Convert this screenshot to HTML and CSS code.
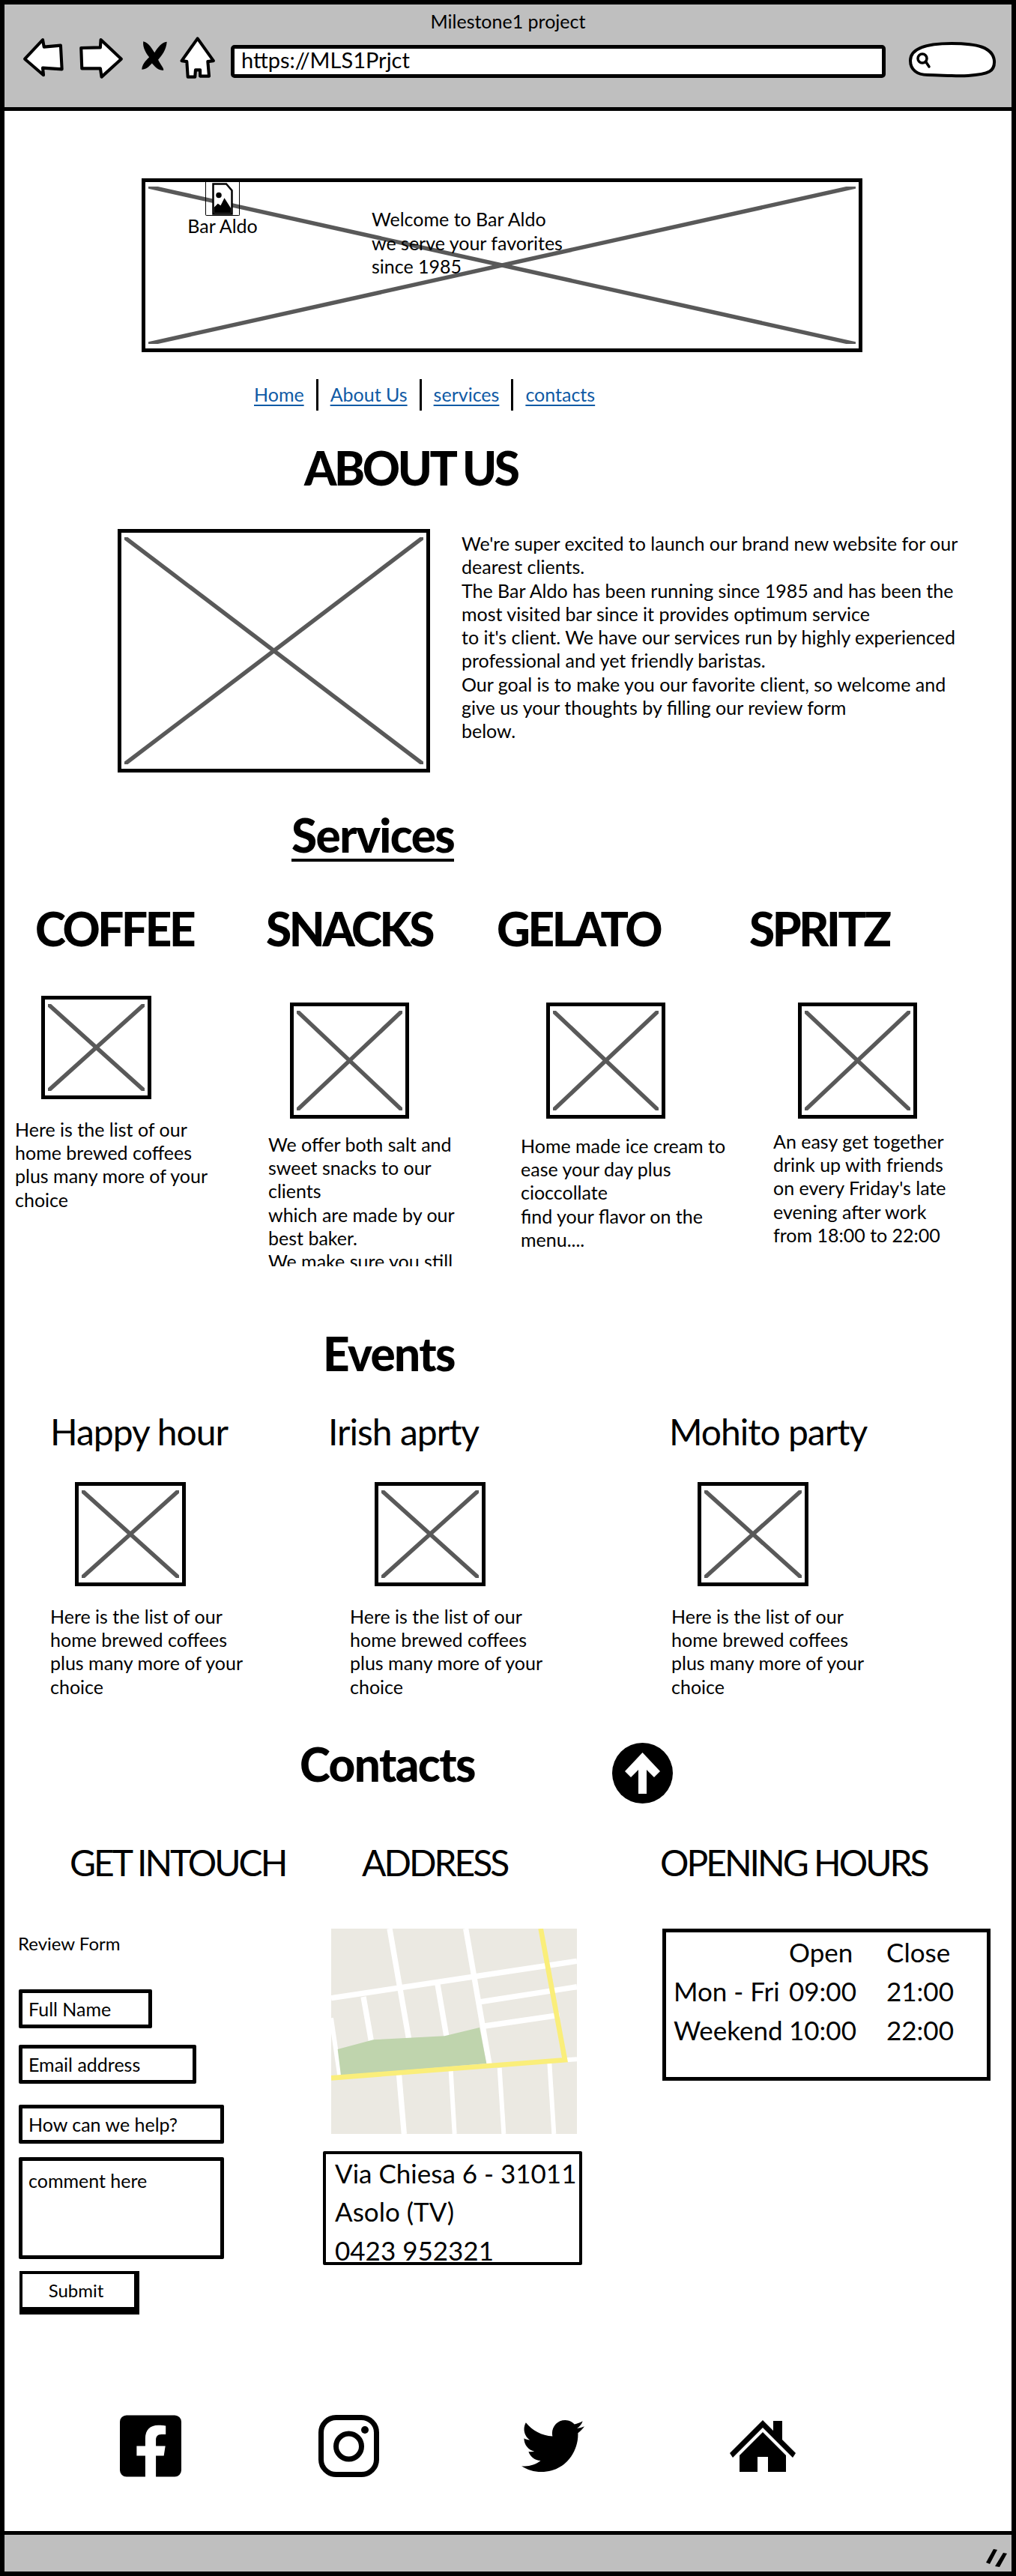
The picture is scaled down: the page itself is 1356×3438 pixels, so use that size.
FILE: index.html
```html
<!doctype html>
<html lang="en">
<head>
<meta charset="UTF-8">
<title>Milestone1 project</title>
<link rel="stylesheet" href="styles.css">
</head>
<body>
<div class="window">

  <!-- browser chrome -->
  <header class="chrome">
    <div class="chrome-title">Milestone1 project</div>
    <div class="chrome-row">
      <svg class="nav-icons" viewBox="90 130 770 180" aria-hidden="true">
        <path class="nav-shape" d="M105 225 L175 150 L180 178 L245 172 L250 265 L175 260 L178 288 Z"/>
        <path class="nav-shape" d="M325 182 L400 180 L402 150 L482 225 L405 295 L400 262 L328 262 Z"/>
        <path d="M568 156 C590 160 605 190 612 200 C625 180 640 160 660 158 C658 190 638 215 626 228 C634 245 652 265 646 270 C620 268 610 250 602 242 C590 254 580 266 562 266 C564 240 586 225 591 218 C581 205 564 180 568 156 Z"/>
        <path class="nav-shape" d="M780 145 L842 232 L820 235 L825 292 L790 292 L790 268 L772 268 L770 295 L742 295 L738 235 L718 232 Z"/>
      </svg>
      <div class="url-bar">https://MLS1Prjct</div>
      <svg class="search-box" viewBox="0 0 118 50" aria-hidden="true">
        <path class="search-pill" d="M3 26 C3 10 24 3 58 3 C92 3 113 8 115 26 C116 40 108 44 80 46 C60 47 44 45 26 45 C12 45 3 38 3 26 Z"/>
        <circle class="search-glass" cx="19" cy="23" r="6"/>
        <path class="search-glass" d="M24 28 L28 34"/>
      </svg>
    </div>
  </header>

  <main class="page">

    <section class="hero">
      <svg class="cross" viewBox="0 0 100 100" preserveAspectRatio="none" aria-hidden="true">
        <line x1="0" y1="0" x2="100" y2="100"/><line x1="100" y1="0" x2="0" y2="100"/>
      </svg>
      <div class="logo">
        <div class="logo-frame">
          <svg viewBox="0 0 24 34" aria-hidden="true">
            <path class="logo-file" d="M2 1 H16 L22 8 V33 H2 Z"/>
            <circle cx="8" cy="13" r="3"/>
            <path d="M3 32 V26 L7 22 L10 24 L14 16 L21 27 V32 Z"/>
          </svg>
        </div>
        <div class="logo-name">Bar Aldo</div>
      </div>
      <p class="hero-text">Welcome to Bar Aldo<br>we serve your favorites<br>since 1985</p>
    </section>

    <nav class="links">
      <a href="#">Home</a>
      <a href="#">About Us</a>
      <a href="#">services</a>
      <a href="#">contacts</a>
    </nav>

    <h1 class="big big-caps about-title">ABOUT US</h1>
    <section class="about">
      <div class="ph about-img">
        <svg class="cross" viewBox="0 0 100 100" preserveAspectRatio="none" aria-hidden="true">
          <line x1="0" y1="0" x2="100" y2="100"/><line x1="100" y1="0" x2="0" y2="100"/>
        </svg>
      </div>
      <p class="about-text">We're super excited to launch our brand new website for our<br>dearest clients.<br>The Bar Aldo has been running since 1985 and has been the<br>most visited bar since it provides optimum service<br>to it's client. We have our services run by highly experienced<br>professional and yet friendly baristas.<br>Our goal is to make you our favorite client, so welcome and<br>give us your thoughts by filling our review form<br>below.</p>
    </section>

    <h2 class="big services-title">Services</h2>
    <section class="services">
      <article class="svc svc-coffee">
        <h3 class="big big-caps svc-name">COFFEE</h3>
        <div class="ph svc-img"><svg class="cross" viewBox="0 0 100 100" preserveAspectRatio="none" aria-hidden="true"><line x1="0" y1="0" x2="100" y2="100"/><line x1="100" y1="0" x2="0" y2="100"/></svg></div>
        <p class="blurb">Here is the list of our<br>home brewed coffees<br>plus many more of your<br>choice</p>
      </article>
      <article class="svc svc-snacks">
        <h3 class="big big-caps svc-name">SNACKS</h3>
        <div class="ph svc-img"><svg class="cross" viewBox="0 0 100 100" preserveAspectRatio="none" aria-hidden="true"><line x1="0" y1="0" x2="100" y2="100"/><line x1="100" y1="0" x2="0" y2="100"/></svg></div>
        <p class="blurb">We offer both salt and<br>sweet snacks to our<br>clients<br>which are made by our<br>best baker.<br>We make sure you still</p>
      </article>
      <article class="svc svc-gelato">
        <h3 class="big big-caps svc-name">GELATO</h3>
        <div class="ph svc-img"><svg class="cross" viewBox="0 0 100 100" preserveAspectRatio="none" aria-hidden="true"><line x1="0" y1="0" x2="100" y2="100"/><line x1="100" y1="0" x2="0" y2="100"/></svg></div>
        <p class="blurb">Home made ice cream to<br>ease your day plus<br>cioccollate<br>find your flavor on the<br>menu....</p>
      </article>
      <article class="svc svc-spritz">
        <h3 class="big big-caps svc-name">SPRITZ</h3>
        <div class="ph svc-img"><svg class="cross" viewBox="0 0 100 100" preserveAspectRatio="none" aria-hidden="true"><line x1="0" y1="0" x2="100" y2="100"/><line x1="100" y1="0" x2="0" y2="100"/></svg></div>
        <p class="blurb">An easy get together<br>drink up with friends<br>on every Friday's late<br>evening after work<br>from 18:00 to 22:00</p>
      </article>
    </section>

    <h2 class="big events-title">Events</h2>
    <section class="events">
      <article class="evt evt-happy">
        <h3 class="sub">Happy hour</h3>
        <div class="ph evt-img"><svg class="cross" viewBox="0 0 100 100" preserveAspectRatio="none" aria-hidden="true"><line x1="0" y1="0" x2="100" y2="100"/><line x1="100" y1="0" x2="0" y2="100"/></svg></div>
        <p class="blurb">Here is the list of our<br>home brewed coffees<br>plus many more of your<br>choice</p>
      </article>
      <article class="evt evt-irish">
        <h3 class="sub">Irish aprty</h3>
        <div class="ph evt-img"><svg class="cross" viewBox="0 0 100 100" preserveAspectRatio="none" aria-hidden="true"><line x1="0" y1="0" x2="100" y2="100"/><line x1="100" y1="0" x2="0" y2="100"/></svg></div>
        <p class="blurb">Here is the list of our<br>home brewed coffees<br>plus many more of your<br>choice</p>
      </article>
      <article class="evt evt-mohito">
        <h3 class="sub">Mohito party</h3>
        <div class="ph evt-img"><svg class="cross" viewBox="0 0 100 100" preserveAspectRatio="none" aria-hidden="true"><line x1="0" y1="0" x2="100" y2="100"/><line x1="100" y1="0" x2="0" y2="100"/></svg></div>
        <p class="blurb">Here is the list of our<br>home brewed coffees<br>plus many more of your<br>choice</p>
      </article>
    </section>

    <div class="contacts-head">
      <h2 class="big contacts-title">Contacts</h2>
      <svg class="to-top" viewBox="0 0 81 81" aria-hidden="true">
        <circle cx="40.5" cy="40.5" r="40.5"/>
        <path class="to-top-arrow" d="M40.5 13 L64 38 L56 46 L46 36 V68 H35 V36 L25 46 L17 38 Z"/>
      </svg>
    </div>

    <section class="contacts">
      <div class="col-form">
        <h3 class="sub caps">GET INTOUCH</h3>
        <form class="review">
          <label class="review-label">Review Form</label>
          <input class="field field-name" type="text" placeholder="Full Name">
          <input class="field field-email" type="text" placeholder="Email address">
          <input class="field field-help" type="text" placeholder="How can we help?">
          <textarea class="field field-comment" placeholder="comment here"></textarea>
          <button class="submit" type="button">Submit</button>
        </form>
      </div>
      <div class="col-address">
        <h3 class="sub caps">ADDRESS</h3>
        <svg class="map" viewBox="66 42 984 822" aria-hidden="true">
          <rect x="66" y="42" width="984" height="822" fill="#ebe9e2"/>
          <g class="roads">
            <path d="M66 320 L1050 172"/>
            <path d="M300 42 L378 490"/>
            <path d="M605 42 L700 590"/>
            <path d="M195 315 L226 490"/>
            <path d="M492 265 L528 475"/>
            <path d="M665 335 L1050 275"/>
            <path d="M680 432 L980 388"/>
            <path class="road-thin" d="M66 400 L100 630"/>
            <path d="M337 620 L358 864"/>
            <path class="road-thin" d="M545 610 L560 864"/>
            <path class="road-thin" d="M740 600 L757 864"/>
            <path class="road-thin" d="M940 580 L958 864"/>
            <path class="road-thin" d="M1010 567 L1050 565"/>
          </g>
          <path fill="#bfd4ad" d="M92 525 L235 487 L520 472 L660 438 L688 582 L105 630 Z"/>
          <path class="highway" d="M905 42 L1002 568 L66 640"/>
        </svg>
        <div class="address-box">Via Chiesa 6 - 31011<br>Asolo (TV)<br>0423 952321</div>
      </div>
      <div class="col-hours">
        <h3 class="sub caps">OPENING HOURS</h3>
        <table class="hours">
          <tr><td></td><td class="h-open">Open</td><td class="h-close">Close</td></tr>
          <tr><td>Mon - Fri</td><td class="h-open">09:00</td><td class="h-close">21:00</td></tr>
          <tr><td>Weekend</td><td class="h-open">10:00</td><td class="h-close">22:00</td></tr>
        </table>
      </div>
    </section>

    <footer class="social">
      <svg class="ic-fb" viewBox="0 32 448 448" aria-hidden="true"><path d="M400 32H48A48 48 0 0 0 0 80v352a48 48 0 0 0 48 48h137.25V327.69h-63V256h63v-54.64c0-62.15 37-96.48 93.67-96.48 27.14 0 55.52 4.84 55.52 4.84v61h-31.27c-30.81 0-40.42 19.12-40.42 38.73V256h68.78l-11 71.69h-57.78V480H400a48 48 0 0 0 48-48V80a48 48 0 0 0-48-48z"/></svg>
      <svg class="ic-insta" viewBox="0 0 81 83" aria-hidden="true">
        <rect class="insta-line" x="3.5" y="3.5" width="74" height="76" rx="20"/>
        <circle class="insta-line" cx="40.5" cy="42" r="17"/>
        <circle cx="62" cy="20" r="5"/>
      </svg>
      <svg class="ic-twitter" viewBox="0 48 512 416" preserveAspectRatio="none" aria-hidden="true"><path d="M459.37 151.716c.325 4.548.325 9.097.325 13.645 0 138.72-105.583 298.558-298.558 298.558-59.452 0-114.68-17.219-161.137-47.106 8.447.974 16.568 1.299 25.34 1.299 49.055 0 94.213-16.568 130.274-44.832-46.132-.975-84.792-31.188-98.112-72.772 6.498.974 12.995 1.624 19.818 1.624 9.421 0 18.843-1.3 27.614-3.573-48.081-9.747-84.143-51.98-84.143-102.985v-1.299c13.969 7.797 30.214 12.67 47.431 13.319-28.264-18.843-46.781-51.005-46.781-87.391 0-19.492 5.197-37.36 14.294-52.954 51.655 63.675 129.3 105.258 216.365 109.807-1.624-7.797-2.599-15.918-2.599-24.04 0-57.828 46.782-104.934 104.934-104.934 30.213 0 57.502 12.67 76.67 33.137 23.715-4.548 46.456-13.32 66.599-25.34-7.798 24.366-24.366 44.833-46.132 57.827 21.117-2.273 41.584-8.122 60.426-16.243-14.292 20.791-32.161 39.308-52.628 54.253z"/></svg>
      <svg class="ic-home" viewBox="0 0 88 69" aria-hidden="true">
        <path d="M44 0 L58 14 V1 H70 V26 L88 44 L84 50 L44 10 L4 50 L0 44 Z"/>
        <path d="M44 16 L75 47 V69 H51 V49 H37 V69 H13 V47 Z"/>
      </svg>
    </footer>
  </main>

  <div class="statusbar">
    <svg class="grip" viewBox="0 0 30 26" aria-hidden="true">
      <path d="M1 20 L11 2 L16 3 L6 22 Z"/>
      <path d="M13 25 L24 7 L29 8 L19 26 Z"/>
    </svg>
  </div>
</div>
</body>
</html>
```

FILE: styles.css
```css
* { box-sizing: border-box; }
html, body { margin: 0; padding: 0; }
body { font-family: "Lato", "Noto Sans", sans-serif; color: #000; background: #fff; }
h1, h2, h3, p { margin: 0; font-weight: normal; }

.window { width: 1356px; height: 3438px; border: 6px solid #000; display: flex; flex-direction: column; overflow: hidden; }

/* browser chrome */
.chrome { height: 142px; background: #bfbfbf; border-bottom: 5px solid #000; flex-shrink: 0; }
.chrome-title { text-align: center; font-size: 25px; line-height: 30px; padding-top: 7px; }
.chrome-row { display: flex; align-items: center; margin-top: 3px; padding-left: 22px; }
.nav-icons { width: 263px; height: 62px; flex-shrink: 0; }
.nav-shape { fill: #fff; stroke: #000; stroke-width: 12; stroke-linejoin: round; }
.url-bar { width: 874px; height: 44px; margin-left: 17px; margin-top: 10px; border: 5px solid #000; border-radius: 5px; background: #fff; font-size: 29px; line-height: 30px; padding-left: 9px; }
.search-box { width: 118px; height: 50px; margin-left: 30px; margin-top: 6px; }
.search-pill { fill: #fff; stroke: #000; stroke-width: 4; }
.search-glass { fill: none; stroke: #000; stroke-width: 3.5; stroke-linecap: round; }

.page { flex: 1; }

/* placeholder images */
.ph { position: relative; border: 5px solid #000; background: #fff; flex-shrink: 0; }
.cross { position: absolute; left: 4px; top: 6px; width: calc(100% - 8px); height: calc(100% - 12px); }
.cross line { stroke: #595959; stroke-width: 5.5; vector-effect: non-scaling-stroke; }

/* headings */
.big { font-weight: 900; font-size: 62px; line-height: 70px; letter-spacing: -1.6px; white-space: nowrap; }
.big-caps { letter-spacing: -3.4px; }
.sub { font-size: 48px; line-height: 60px; letter-spacing: -1px; white-space: nowrap; }
.caps { letter-spacing: -3px; }
.blurb { font-size: 25px; line-height: 31.2px; }

/* hero */
.hero { position: relative; width: 962px; height: 232px; margin: 90px 0 0 183px; border: 5px solid #000; display: flex; padding-left: 54px; }
.logo { position: relative; width: 98px; text-align: center; }
.logo-frame { width: 46px; height: 46px; margin: -1px auto 0; border: 1.5px solid #000; border-top: 0; border-radius: 0 0 2px 2px; padding: 2px 7px 0; background: transparent; }
.logo-frame svg { width: 100%; height: 100%; display: block; }
.logo-file { fill: #fff; stroke: #000; stroke-width: 2; }
.logo-name { font-size: 25px; line-height: 30px; margin-top: -2px; white-space: nowrap; }
.hero-text { position: relative; margin: 34px 0 0 150px; font-size: 25px; line-height: 31.5px; white-space: nowrap; }

/* nav */
.links { display: flex; height: 42px; margin: 36px 0 0 317px; }
.links a { color: #0f5aa5; font-size: 25px; line-height: 40px; padding: 0 16px; text-decoration: underline; text-underline-offset: 4px; border-right: 3px solid #000; }
.links a:last-child { border-right: 0; }

/* about */
.about-title { margin: 41px 0 0 400px; }
.about { display: flex; margin: 47px 0 0 151px; }
.about-img { width: 417px; height: 325px; }
.about-text { margin-left: 42px; padding-top: 4px; font-size: 25px; line-height: 31.3px; white-space: nowrap; }

/* services */
.services-title { display: inline-block; margin: 51px 0 0 383px; line-height: 64px; border-bottom: 4px solid #000; }
.services { display: grid; grid-template-columns: 335px 308px 337px 350px; margin: 54px 0 0 14px; }
.svc { display: flex; flex-direction: column; }
.svc-img { width: 159px; height: 155px; margin-top: 64px; }
.svc .blurb { overflow: hidden; white-space: nowrap; }
.svc-coffee .svc-name { padding-left: 27px; }
.svc-coffee .svc-img { width: 147px; height: 138px; margin: 55px 0 0 35px; }
.svc-coffee .blurb { margin-top: 25px; }
.svc-snacks .svc-img { margin-left: 32px; }
.svc-snacks .blurb { margin: 19px 0 0 3px; height: 178px; }
.svc-gelato .svc-img { margin-left: 66px; }
.svc-gelato .blurb { margin: 21px 0 0 32px; }
.svc-spritz .svc-img { margin-left: 65px; }
.svc-spritz .blurb { margin: 15px 0 0 32px; }

/* events */
.events-title { margin: 81px 0 0 425px; }
.events { display: grid; grid-template-columns: 371px 455px 1fr; margin: 40px 0 0 61px; }
.evt-img { width: 148px; height: 139px; margin: 37px 0 0 33px; }
.evt .blurb { margin-top: 25px; white-space: nowrap; }
.evt-irish .evt-img { margin-left: 62px; }
.evt-irish .blurb { margin-left: 29px; }
.evt-mohito .evt-img { margin-left: 38px; }
.evt-mohito .blurb { margin-left: 3px; }

/* contacts */
.contacts-head { display: flex; margin: 52px 0 0 394px; }
.contacts-title { width: 417px; }
.to-top { width: 81px; height: 81px; margin-top: 7px; }
.to-top-arrow { fill: #fff; }

.contacts { display: grid; grid-template-columns: 407px 450px 1fr; margin: 49px 0 0 18px; }
.col-form .sub { padding-left: 69px; }
.col-address .sub { padding-left: 52px; }

.review { display: flex; flex-direction: column; align-items: flex-start; }
.review-label { font-size: 24px; line-height: 30px; margin-top: 63px; }
.field { display: block; height: 52px; margin-left: 1px; border: 5px solid #000; border-radius: 2px; background: #fff; padding: 0 8px; font: 25px "Lato", "Noto Sans", sans-serif; color: #000; outline: none; }
.field::placeholder { color: #000; opacity: 1; }
.field-name { width: 178px; margin-top: 46px; }
.field-email { width: 237px; margin-top: 22px; }
.field-help { width: 274px; margin-top: 28px; }
.field-comment { width: 274px; height: 136px; margin-top: 18px; padding-top: 11px; resize: none; }
.submit { width: 160px; height: 58px; margin: 16px 0 0 2px; border: 4px solid #000; border-width: 4px 7px 10px 4px; background: #fff; font: 24px "Lato", "Noto Sans", sans-serif; color: #000; padding: 0 6px 0 0; }

.map { display: block; width: 328px; height: 274px; margin: 58px 0 0 11px; }
.roads { stroke: #fff; stroke-width: 22; fill: none; }
.road-thin { stroke-width: 18; }
.highway { stroke: #faee7a; stroke-width: 20; fill: none; }
.address-box { width: 346px; height: 152px; margin-top: 23px; border: 4px solid #000; border-radius: 2px; padding: 0 0 0 12px; font-size: 35px; line-height: 51.5px; overflow: hidden; white-space: nowrap; }

.hours { width: 438px; height: 203px; margin: 58px 0 0 3px; border: 5px solid #000; border-collapse: separate; border-spacing: 0; font-size: 35px; line-height: 50px; display: block; padding: 0 0 0 10px; }
.hours td { padding: 0; height: 52px; white-space: nowrap; }
.hours td:first-child { width: 147px; }
.h-open { width: 137px; padding-left: 7px !important; }

/* footer icons */
.social { display: flex; align-items: center; margin: 134px 0 0 154px; }
.social svg { display: block; flex-shrink: 0; }
.ic-fb { width: 82px; height: 83px; }
.ic-insta { width: 81px; height: 83px; margin-left: 183px; }
.insta-line { fill: none; stroke: #000; stroke-width: 7; }
.ic-twitter { width: 84px; height: 69px; margin-left: 190px; }
.ic-home { width: 88px; height: 69px; margin-left: 194px; }

.statusbar { height: 55px; margin-bottom: -1px; background: #bfbfbf; border-top: 5px solid #000; flex-shrink: 0; display: flex; justify-content: flex-end; padding: 17px 5px 0 0; }
.grip { width: 30px; height: 26px; }
```
